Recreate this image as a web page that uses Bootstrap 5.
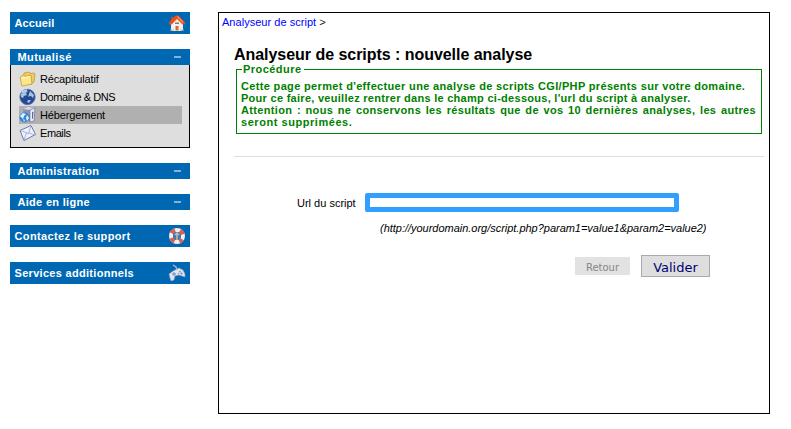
<!DOCTYPE html>
<html lang="fr">
<head>
<meta charset="utf-8">
<title>Analyseur de script</title>
<link href="https://cdn.jsdelivr.net/npm/bootstrap@5.3.0/dist/css/bootstrap.min.css" rel="stylesheet">
<style>
body{font:11px/12px "Liberation Sans",Arial,sans-serif;color:#000;background:#fff}
.page{padding:12px 21px 0 10px;gap:28px}
.side{width:180px;gap:15px}
.bar{background:#0068b3;color:#fff;font-weight:700;text-decoration:none;letter-spacing:.3px}
.bar-lg{height:22px;padding:0 4px 0 4.5px}
.bar-sm{height:16px;padding:0 9px 0 7.5px}
.dash{width:7px;height:2px;background:#80b3d9}
.sub{background:#dedede;border:1px solid #000;border-top:0;height:83px;padding:5px 7px 0 8px}
.sub a{height:18px;gap:4px;color:#000;text-decoration:none;letter-spacing:-.15px}
.sub a.current{background:#b0b0b0}
.t1{letter-spacing:.1px}
.t2{letter-spacing:.38px}
.t4,.t6{letter-spacing:-.42px}
.t9{letter-spacing:.36px}
.main{width:552px;height:402px;border:1px solid #000;padding:3px 5px 0 3px}
.crumb{height:12px;color:#222}
.crumb a{color:#00f;text-decoration:none;letter-spacing:.03px}
.inner{margin-left:12px}
h1{font-size:16px;line-height:18px;font-weight:700;margin:18px 0 0;letter-spacing:-.04px}
.proc{margin:5px 2px 0;color:green;font-weight:700;letter-spacing:.34px;border:1px solid green;height:65px;padding:0 5px 0 4px}
.proc-title{width:max-content;margin:-7px 0 5px 1px;padding:0 3px 0 1px;background:#fff;letter-spacing:.45px}
.proc p{margin:0;white-space:nowrap}
.proc .l2{letter-spacing:.28px}
.proc .l4{letter-spacing:.55px}
.proc p.full{text-align:justify;text-align-last:justify}
.rule{height:1px;background:#dedede;margin-top:22px}
.url-row{margin:36px 0 0 63px;gap:9px}
.url-row input{width:314px;height:19px;border:5px solid #309fff;border-radius:2px;padding:0;outline:0;font-size:8px;background:#fff}
.hint{margin:10px 0 0 146px;font-style:italic;letter-spacing:-.02px}
.actions{margin:21px 54px 0 0;gap:11px}
.actions .btn{border-radius:0;padding:0;font-family:"DejaVu Sans",sans-serif}
.actions .back{width:55px;height:18px;border:0;background:#e2e2e2;color:#868686;font-size:10px;line-height:20px;padding-top:1px;margin-top:2px}
.actions .ok{width:69px;height:22px;border:1px solid #aaa;background:#dedede;color:#000073;font-size:13px;line-height:20px;padding-top:2px}
</style>
<script src="https://cdn.jsdelivr.net/npm/bootstrap@5.3.0/dist/js/bootstrap.bundle.min.js"></script>
</head>
<body>
<div class="page d-flex align-items-start">
<nav class="side d-flex flex-column flex-shrink-0">
<a href="#" class="bar bar-lg d-flex align-items-center justify-content-between"><span class="t1">Accueil</span>
<svg width="18" height="18" viewBox="0 0 18 18"><path d="M3 9 9 4l6 5v7l-2 1H4l-1-1z" fill="#f3f0ee"/><path d="M3 3h2.500v5H3z" fill="#c44a20"/><path d="M7.500 1.500h3L17 8.500v2h-2.500L9 5l-5.500 5.500H1v-2z" fill="#e94e20"/><path d="M9.500 2.500 15 8.500" stroke="#ff8a45" stroke-width="1.500" fill="none"/><path d="M7.500 12h3v4.500h-3z" fill="#d8692b"/><path d="M7 8.500h4V10H7z" fill="#8d7774"/><path d="M2 16h4m6 0h4" stroke="#b9b7a4"/></svg></a>
<div>
<a href="#" class="bar bar-sm d-flex align-items-center justify-content-between"><span class="t2">Mutualisé</span><span class="dash"></span></a>
<div class="sub d-flex flex-column">
<a href="#" class="d-flex align-items-center"><svg width="17" height="18" viewBox="0 0 17 18"><path d="m5 3 5-1 1 1.500 4-.5 1 1-1 8-3 2.500-8-3z" fill="#f0cd5c" stroke="#b88f36" stroke-width=".7"/><path d="m1 7 4-2 1 1.500 6-1.500 1 9L3 16z" fill="#fbe88d" stroke="#c79b39" stroke-width=".8"/><path d="m2.500 8.500 8-2" stroke="#fffbd2"/></svg><span class="t3">Récapitulatif</span></a>
<a href="#" class="d-flex align-items-center"><svg width="17" height="18" viewBox="0 0 17 18"><circle cx="8.500" cy="9" r="7.700" fill="#244b91" stroke="#5575ad" stroke-width=".8"/><path d="M2 6c2-4 6-4 7-3L7 5l1 2-3 1-1 2-2-1zM11 3l4 4-1 3-2-2-3 .5L10 6zM9 12l3 0-2 3-2-1z" fill="#a9c0e2"/><path d="M3 4q3-2 5-2" stroke="#eaf5ff" fill="none"/></svg><span class="t4">Domaine &amp; DNS</span></a>
<a href="#" class="current d-flex align-items-center"><svg width="17" height="18" viewBox="0 0 17 18"><path d="m4 3 5-2 7 1-1 13-4 1-6-3z" fill="#8992b4"/><path d="m4 3 5-2 7 1-5 2z" fill="#d5d9e8"/><path d="m11 4 5-2-1 13-4 1z" fill="#eceef9" stroke="#626a91" stroke-width=".6"/><path d="m13 6 1.500-.5-.5 7-1 .5z" fill="#626b95"/><circle cx="5.500" cy="11.500" r="5" fill="#3186d8"/><path d="m1 10 3-3 3 1-2 2-1 3zM8 9l2 3-2 3-1-3zM4 13l2 1-1 2z" fill="#e1f3ff"/></svg><span class="t5">Hébergement</span></a>
<a href="#" class="d-flex align-items-center"><svg width="17" height="18" viewBox="0 0 17 18"><path d="m1 6.500 11-5 4.500 9L5 16.500z" fill="#eef0fc" stroke="#6f7aa8"/><path d="m1.500 6.500 8 3L12 2M5 16l2.500-7M16 11 9.500 9" stroke="#9aa2c8" stroke-width=".8" fill="none"/></svg><span class="t6">Emails</span></a>
</div>
</div>
<a href="#" class="bar bar-sm d-flex align-items-center justify-content-between"><span class="t7">Administration</span><span class="dash"></span></a>
<a href="#" class="bar bar-sm d-flex align-items-center justify-content-between"><span class="t8">Aide en ligne</span><span class="dash"></span></a>
<a href="#" class="bar bar-lg d-flex align-items-center justify-content-between"><span class="t9">Contactez le support</span>
<svg width="18" height="18" viewBox="0 0 18 18"><circle cx="9" cy="9" r="6" fill="none" stroke="#f5eeee" stroke-width="4"/><circle cx="9" cy="9" r="6" fill="none" stroke="#e35b50" stroke-width="4" stroke-dasharray="4.700 4.725" stroke-dashoffset="2.350" transform="rotate(45 9 9)"/><circle cx="9" cy="9" r="4" fill="#347fb3"/><path d="M9 6v7M7 8l2-2 2 2" stroke="#d1b4a1" stroke-width="1.500" fill="none"/></svg></a>
<a href="#" class="bar bar-lg d-flex align-items-center justify-content-between"><span class="t10">Services additionnels</span>
<svg width="18" height="18" viewBox="0 0 18 18"><path d="M9 6 8 3 5 1" stroke="#a9b9d5" stroke-width="1.300" fill="none"/><path d="m1 10 4-3 6-3 4 2 2 4v3l-3-1-3-1-4 1-1 4-3 1-1-3z" fill="#dfe5f4" stroke="#8795bd" stroke-width=".6"/><path d="M4 10h4M6 8v4" stroke="#7787ae"/><circle cx="12" cy="7.500" r="1" fill="#87b96d"/><circle cx="13.500" cy="9.500" r="1" fill="#5e83cf"/><circle cx="10.500" cy="9.500" r=".8" fill="#cc8992"/></svg></a>
</nav>
<main class="main flex-shrink-0">
<div class="crumb"><a href="#">Analyseur de script</a> &gt;</div>
<div class="inner">
<h1>Analyseur de scripts : nouvelle analyse</h1>
<section class="proc">
<div class="proc-title">Procédure</div>
<p class="l1">Cette page permet d'effectuer une analyse de scripts CGI/PHP présents sur votre domaine.</p>
<p class="l2">Pour ce faire, veuillez rentrer dans le champ ci-dessous, l'url du script à analyser.</p>
<p class="full">Attention : nous ne conservons les résultats que de vos 10 dernières analyses, les autres</p>
<p class="l4">seront supprimées.</p>
</section>
<div class="rule"></div>
<form>
<div class="url-row d-flex align-items-center"><label for="url">Url du script</label><input id="url" type="text"></div>
<div class="hint">(http://yourdomain.org/script.php?param1=value1&amp;param2=value2)</div>
<div class="actions d-flex justify-content-end align-items-start"><button type="button" class="btn back">Retour</button><button type="button" class="btn ok">Valider</button></div>
</form>
</div>
</main>
</div>
</body>
</html>
